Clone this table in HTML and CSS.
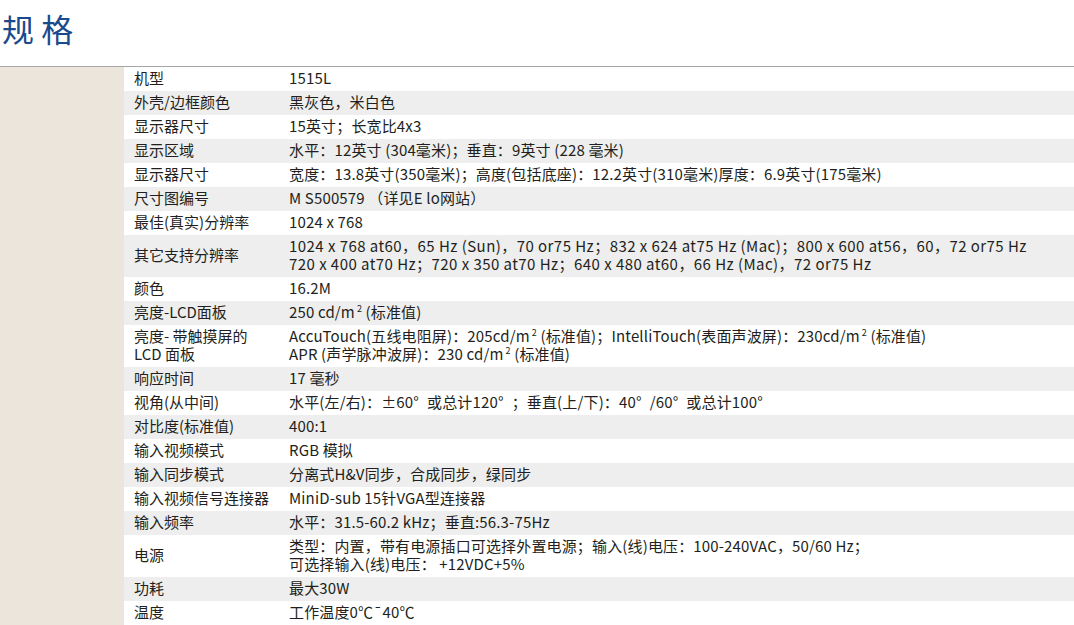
FILE: index.html
```html
<!DOCTYPE html>
<html lang="zh-CN">
<head>
<meta charset="utf-8">
<title>规格</title>
<link rel="stylesheet" href="styles.css">
</head>
<body>
<header class="head"><h1 class="title">规 格</h1></header>
<main class="main">
  <aside class="side"></aside>
  <div class="specs">
    <div class="row"><div class="k">机型</div><div class="v">1515L</div></div>
    <div class="row alt"><div class="k">外壳/边框颜色</div><div class="v">黑灰色，米白色</div></div>
    <div class="row"><div class="k">显示器尺寸</div><div class="v">15英寸；长宽比4x3</div></div>
    <div class="row alt"><div class="k">显示区域</div><div class="v">水平：12英寸 (304毫米)；垂直：9英寸 (228 毫米)</div></div>
    <div class="row"><div class="k">显示器尺寸</div><div class="v">宽度：13.8英寸(350毫米)；高度(包括底座)：12.2英寸(310毫米)厚度：6.9英寸(175毫米)</div></div>
    <div class="row alt"><div class="k">尺寸图编号</div><div class="v">M S500579 （详见E lo网站）</div></div>
    <div class="row"><div class="k">最佳(真实)分辨率</div><div class="v">1024 x 768</div></div>
    <div class="row alt"><div class="k mid">其它支持分辨率</div><div class="v wide">1024 x 768 at60，65 Hz (Sun)，70 or75 Hz；832 x 624 at75 Hz (Mac)；800 x 600 at56，60，72 or75 Hz<br>720 x 400 at70 Hz；720 x 350 at70 Hz；640 x 480 at60，66 Hz (Mac)，72 or75 Hz</div></div>
    <div class="row"><div class="k">颜色</div><div class="v">16.2M</div></div>
    <div class="row alt"><div class="k">亮度-LCD面板</div><div class="v">250 cd/m<sup>2</sup> (标准值)</div></div>
    <div class="row"><div class="k">亮度- 带触摸屏的<br>LCD 面板</div><div class="v">AccuTouch(五线电阻屏)：205cd/m<sup>2</sup> (标准值)；IntelliTouch(表面声波屏)：230cd/m<sup>2</sup> (标准值)<br>APR (声学脉冲波屏)：230 cd/m<sup>2</sup> (标准值)</div></div>
    <div class="row alt"><div class="k">响应时间</div><div class="v">17 毫秒</div></div>
    <div class="row"><div class="k">视角(从中间)</div><div class="v">水平(左/右)：±60<span class="deg">°</span>或总计120<span class="deg">°</span>；垂直(上/下)：40<span class="deg">°</span>/60<span class="deg">°</span>或总计100<span class="deg">°</span></div></div>
    <div class="row alt"><div class="k">对比度(标准值)</div><div class="v">400:1</div></div>
    <div class="row"><div class="k">输入视频模式</div><div class="v">RGB 模拟</div></div>
    <div class="row alt"><div class="k">输入同步模式</div><div class="v">分离式H&amp;V同步，合成同步，绿同步</div></div>
    <div class="row"><div class="k">输入视频信号连接器</div><div class="v">MiniD-sub 15针VGA型连接器</div></div>
    <div class="row alt"><div class="k">输入频率</div><div class="v">水平：31.5-60.2 kHz；垂直:56.3-75Hz</div></div>
    <div class="row"><div class="k mid">电源</div><div class="v">类型：内置，带有电源插口可选择外置电源；输入(线)电压：100-240VAC，50/60 Hz；<br>可选择输入(线)电压： +12VDC+5%</div></div>
    <div class="row alt"><div class="k">功耗</div><div class="v">最大30W</div></div>
    <div class="row"><div class="k">温度</div><div class="v">工作温度0℃¯40℃</div></div>
    <div class="row alt"><div class="k">&nbsp;</div><div class="v">&nbsp;</div></div>
  </div>
</main>
</body>
</html>
```
FILE: styles.css
```css
html, body {
  margin: 0;
  padding: 0;
  background: #ffffff;
  overflow: hidden;
}
body {
  font-family: "Noto Sans CJK SC", "Noto Sans", sans-serif;
  color: #231f20;
}
.head {
  box-sizing: border-box;
  height: 67px;
  border-bottom: 1px solid #a6a6a6;
}
.title {
  margin: 0;
  padding: 8px 0 0 2px;
  font-size: 32px;
  line-height: 40px;
  font-weight: 400;
  color: #1a4a8c;
}
.main {
  display: flex;
  min-height: 600px;
}
.side {
  width: 124px;
  flex: none;
  background: #ebe5dc;
}
.specs {
  flex: 1;
  display: flex;
  flex-direction: column;
}
.row {
  display: grid;
  grid-template-columns: 165px 1fr;
  padding: 2px 0 4px;
  font-size: 15px;
  line-height: 18px;
  background: #ffffff;
}
.row.alt {
  background: #edeeed;
}
.k {
  padding-left: 10px;
  white-space: nowrap;
}
.k.mid {
  align-self: center;
}
.v {
  white-space: nowrap;
  letter-spacing: 0.15px;
}
.v.wide {
  letter-spacing: 0.45px;
}
.deg {
  margin-right: 8px;
}
sup {
  font-size: 9px;
  line-height: 0;
  vertical-align: 6px;
  margin-left: 2px;
}
```
